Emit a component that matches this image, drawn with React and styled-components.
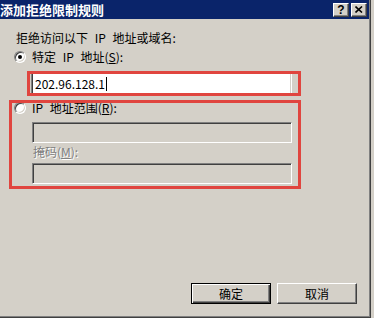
import React from 'react';
import styled, { createGlobalStyle } from 'styled-components';

const Global = createGlobalStyle`
  html, body { margin: 0; padding: 0; background: #d4d0c8; }
  body {
    font-family: "Noto Sans CJK SC", "Liberation Sans", sans-serif;
    font-size: 12px;
    color: #000;
  }
  * { box-sizing: border-box; }
`;

const Window = styled.div`
  width: 371px;
  height: 318px;
  background: #d4d0c8;
  border-right: 1px solid #404040;
  border-bottom: 1px solid #404040;
  box-shadow: inset -1px -1px #808080;
  display: flex;
  flex-direction: column;
`;

const TitleBar = styled.div`
  height: 19px;
  margin-right: 1px;
  background: #0a246a;
  display: flex;
  align-items: center;
  padding-right: 2px;
`;

const TitleText = styled.div`
  flex: 1;
  color: #fff;
  font-weight: bold;
  font-size: 13px;
  line-height: 19px;
  white-space: nowrap;
`;

const CaptionButtons = styled.div`
  display: flex;
  gap: 2px;
`;

const CaptionButton = styled.div`
  width: 16px;
  height: 14px;
  background: #d4d0c8;
  border: 1px solid;
  border-color: #fff #404040 #404040 #fff;
  box-shadow: inset -1px -1px #808080;
  display: flex;
  align-items: center;
  justify-content: center;
  font-family: "Liberation Sans", sans-serif;
  font-weight: bold;
  font-size: 12px;
  line-height: 1;
  color: #000;
`;

const Body = styled.div`
  flex: 1;
  display: flex;
  flex-direction: column;
  padding-top: 12px;
`;

const Prompt = styled.div`
  margin-left: 16px;
  height: 14px;
  line-height: 14px;
  white-space: nowrap;
  word-spacing: 4px;
`;

const RadioRow = styled.div`
  display: flex;
  align-items: center;
  gap: 6px;
  height: 14px;
  line-height: 14px;
  margin-top: ${p => p.$top || 0}px;
  padding-left: ${p => p.$left || 0}px;
  white-space: nowrap;
  word-spacing: 4px;
`;

const RadioCircle = styled.span`
  position: relative;
  width: 12px;
  height: 12px;
  border-radius: 50%;
  background: #fff;
  border: 1px solid;
  border-color: #808080 #fff #fff #808080;
  box-shadow: inset 1px 1px #404040, inset -1px -1px #d4d0c8;
  display: flex;
  align-items: center;
  justify-content: center;
  flex: none;
`;

const Dot = styled.span`
  width: 4px;
  height: 4px;
  border-radius: 50%;
  background: #000;
`;

const Frame = styled.div`
  position: relative;
  margin-top: ${p => p.$top}px;
  margin-left: ${p => p.$left}px;
  width: ${p => p.$width}px;
  padding: ${p => p.$pad};
  &::after {
    content: '';
    position: absolute;
    inset: 0;
    border: 3px solid #e0453f;
    pointer-events: none;
    z-index: 1;
  }
`;

const Field = styled.div`
  width: ${p => p.$width}px;
  height: ${p => p.$height}px;
  margin-top: ${p => p.$top || 0}px;
  margin-left: ${p => p.$left || 0}px;
  background: ${p => (p.$disabled ? '#d4d0c8' : '#fff')};
  border: 1px solid;
  border-color: #808080 #fff #fff #808080;
  box-shadow: inset 1px 1px #404040, inset -1px -1px #d4d0c8;
  display: flex;
  align-items: center;
  padding-left: 3px;
  white-space: nowrap;
`;

const Caret = styled.span`
  display: inline-block;
  width: 1px;
  height: 14px;
  background: #000;
  margin-left: 1px;
`;

const DisabledLabel = styled.div`
  margin-top: 2px;
  margin-left: 24px;
  height: 14px;
  line-height: 14px;
  color: #808080;
  text-shadow: 1px 1px #fff;
`;

const Footer = styled.div`
  margin-top: auto;
  display: flex;
  justify-content: flex-end;
  gap: 6px;
  padding: 0 13px 13px 0;
`;

const Button = styled.div`
  width: 80px;
  height: 21px;
  background: #d4d0c8;
  display: flex;
  align-items: center;
  justify-content: center;
  border: 1px solid;
  border-color: ${p => (p.$default ? '#000' : '#fff #404040 #404040 #fff')};
  box-shadow: ${p =>
    p.$default
      ? 'inset 1px 1px #fff, inset -1px -1px #404040, inset -2px -2px #808080'
      : 'inset -1px -1px #808080'};
  line-height: 1;
`;

function Radio({ checked }) {
  return <RadioCircle>{checked && <Dot />}</RadioCircle>;
}

export default function App() {
  return (
    <>
      <Global />
      <Window>
        <TitleBar>
          <TitleText>添加拒绝限制规则</TitleText>
          <CaptionButtons>
            <CaptionButton>?</CaptionButton>
            <CaptionButton>
              <svg width="8" height="7" viewBox="0 0 8 7">
                <path d="M0.5 0.5 L7 6.5 M7 0.5 L0.5 6.5" stroke="#000" strokeWidth="1.6" />
              </svg>
            </CaptionButton>
          </CaptionButtons>
        </TitleBar>
        <Body>
          <Prompt>拒绝访问以下 IP 地址或域名:</Prompt>
          <RadioRow $top={5} $left={14}>
            <Radio checked />
            <span>特定 IP 地址(<u>S</u>):</span>
          </RadioRow>
          <Frame $top={7} $left={27} $width={274} $pad="1px 0 1px 4px">
            <Field $width={261} $height={23}>
              202.96.128.1<Caret />
            </Field>
          </Frame>
          <Frame $top={4} $left={9} $width={292} $pad="1px 0 5px 0">
            <RadioRow $left={5}>
              <Radio />
              <span>IP 地址范围(<u>R</u>):</span>
            </RadioRow>
            <Field $disabled $width={260} $height={21} $top={7} $left={23} />
            <DisabledLabel>掩码(<u>M</u>):</DisabledLabel>
            <Field $disabled $width={260} $height={21} $top={4} $left={23} />
          </Frame>
          <Footer>
            <Button $default>确定</Button>
            <Button>取消</Button>
          </Footer>
        </Body>
      </Window>
    </>
  );
}
